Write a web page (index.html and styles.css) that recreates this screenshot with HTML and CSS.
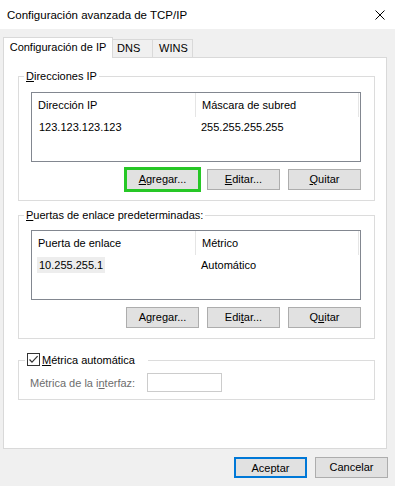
FILE: index.html
```html
<!DOCTYPE html>
<html lang="es">
<head>
<meta charset="utf-8">
<title>Configuración avanzada de TCP/IP</title>
<link rel="stylesheet" href="styles.css">
</head>
<body>
<div class="window">
  <header class="titlebar">
    <span class="title">Configuración avanzada de TCP/IP</span>
    <svg class="close" viewBox="0 0 10 10" width="10" height="10"><path d="M0.5 0.5 L9.5 9.5 M9.5 0.5 L0.5 9.5" stroke="#000" stroke-width="1" fill="none"/></svg>
  </header>

  <div class="tabs">
    <div class="tab tab-active">Configuración de IP</div>
    <div class="tab tab-dns">DNS</div>
    <div class="tab tab-wins">WINS</div>
  </div>

  <div class="panel">
    <fieldset class="group group-ip">
      <legend class="legend"><u>D</u>irecciones IP</legend>
      <div class="group-body body-ip">
        <div class="list">
          <div class="list-head">
            <div class="hcell">Dirección IP</div>
            <div class="hcell">Máscara de subred</div>
            <div class="hcell hcell-end"></div>
          </div>
          <div class="list-row">
            <div class="cell cell-first"><span class="item">123.123.123.123</span></div>
            <div class="cell">255.255.255.255</div>
          </div>
        </div>
        <div class="btn-row">
          <button class="btn btn-focus"><u>A</u>gregar...</button>
          <button class="btn"><u>E</u>ditar...</button>
          <button class="btn"><u>Q</u>uitar</button>
        </div>
      </div>
    </fieldset>

    <fieldset class="group group-gw">
      <legend class="legend"><u>P</u>uertas de enlace predeterminadas:</legend>
      <div class="group-body body-gw">
        <div class="list">
          <div class="list-head">
            <div class="hcell">Puerta de enlace</div>
            <div class="hcell">Métrico</div>
            <div class="hcell hcell-end"></div>
          </div>
          <div class="list-row">
            <div class="cell cell-first"><span class="item item-selected">10.255.255.1</span></div>
            <div class="cell">Automático</div>
          </div>
        </div>
        <div class="btn-row">
          <button class="btn">A<u>g</u>regar...</button>
          <button class="btn">Edi<u>t</u>ar...</button>
          <button class="btn">Q<u>u</u>itar</button>
        </div>
      </div>
    </fieldset>

    <fieldset class="group group-metric">
      <legend class="legend legend-check">
        <svg class="checkbox" viewBox="0 0 13 13" width="13" height="13"><rect x="0.5" y="0.5" width="12" height="12" fill="#fff" stroke="#333"/><path d="M2.5 6.5 L5 9.2 L10.6 3.2" stroke="#333" stroke-width="1.2" fill="none"/></svg>
        <span class="check-label"><u>M</u>étrica automática</span>
      </legend>
      <div class="group-body body-metric">
        <div class="metric-row">
          <span class="metric-label">Métrica de la i<u>n</u>terfaz:</span>
          <span class="metric-input"></span>
        </div>
      </div>
    </fieldset>
  </div>

  <div class="footer">
    <button class="btn btn-default">Aceptar</button>
    <button class="btn">Cancelar</button>
  </div>
</div>
</body>
</html>
```

FILE: styles.css
```css
* {
  box-sizing: border-box;
}

html, body {
  margin: 0;
  padding: 0;
}

body {
  width: 395px;
  height: 486px;
  overflow: hidden;
  background: #f0f0f0;
  font-family: "Liberation Sans", Arial, sans-serif;
  font-size: 11px;
  color: #000;
}

.window {
  width: 395px;
  height: 486px;
}

.titlebar {
  height: 29px;
  background: #fff;
  display: flex;
  align-items: center;
  justify-content: space-between;
  padding: 0 10px 0 7px;
}

.title {
  font-size: 11.5px;
}

.close {
  display: block;
}

/* Tabs */
.tabs {
  display: flex;
  align-items: flex-end;
  height: 20px;
  margin: 8px 0 0 3px;
}

.tab {
  height: 18px;
  border: 1px solid #d9d9d9;
  border-bottom: 0;
  background: #f0f0f0;
  line-height: 17px;
  white-space: nowrap;
}

.tab-active {
  position: relative;
  z-index: 1;
  width: 110px;
  height: 21px;
  margin-bottom: -1px;
  background: #fff;
  text-align: center;
  line-height: 18px;
}

.tab-dns {
  width: 41px;
  margin-left: -1px;
  padding-left: 4px;
}

.tab-wins {
  width: 41px;
  margin-left: -1px;
  padding-left: 6px;
}

/* Panel */
.panel {
  height: 392px;
  margin: 0 8px 0 3px;
  background: #fff;
  border: 1px solid #d9d9d9;
  padding: 11px 11px 0 14px;
}

.group {
  margin: 0;
  padding: 0;
  min-width: 0;
  border: 1px solid #dcdcdc;
}

.legend {
  margin-left: 5px;
  padding: 0 2px;
  line-height: 14px;
  height: 14px;
  white-space: nowrap;
}

.group-gw {
  margin-top: 7px;
}

.group-metric {
  margin-top: 14px;
}

.group-body {
  padding: 9px 13px 10px 12px;
}

.body-gw {
  padding-top: 8px;
}

.body-metric {
  padding: 6px 0 7px 11px;
}

/* List view */
.list {
  height: 70px;
  border: 1px solid #828790;
  background: #fff;
}

.list-head {
  display: grid;
  grid-template-columns: 164px 163px 1fr;
  height: 24px;
  line-height: 24px;
}

.hcell {
  padding-left: 6px;
  border-right: 1px solid #e5e5e5;
  white-space: nowrap;
  overflow: hidden;
}

.hcell-end {
  border-right: 0;
  padding: 0;
}

.list-row {
  display: grid;
  grid-template-columns: 164px 1fr;
  height: 16px;
  margin-top: 2px;
  line-height: 16px;
}

.cell {
  padding-left: 5px;
  white-space: nowrap;
}

.cell-first {
  padding-left: 5px;
}

.item {
  display: inline-block;
  padding: 0 2px;
}

.item-selected {
  background: #ededed;
}

/* Buttons */
.btn-row {
  display: flex;
  justify-content: flex-end;
  gap: 8px;
  margin-top: 7px;
}

.btn {
  width: 73px;
  height: 21px;
  padding: 0;
  border: 1px solid #adadad;
  background: #e1e1e1;
  font-family: inherit;
  font-size: 11px;
  color: #000;
  line-height: 19px;
}

.btn-focus {
  outline: 3px solid #26c726;
  outline-offset: -1px;
}

.btn-default {
  border: 2px solid #0078d7;
}

/* Metric group */
.legend-check {
  display: flex;
  align-items: flex-start;
  margin-left: 6px;
  padding: 0 13px 0 2px;
}

.checkbox {
  display: block;
  flex: none;
}

.check-label {
  margin-left: 2px;
  line-height: 14px;
}

.metric-row {
  display: flex;
  align-items: center;
  height: 19px;
}

.metric-label {
  width: 117px;
  color: #6d6d6d;
  white-space: nowrap;
}

.metric-input {
  width: 75px;
  height: 19px;
  border: 1px solid #cccccc;
  background: #fff;
}

/* Footer */
.footer {
  display: flex;
  justify-content: flex-end;
  gap: 8px;
  padding: 8px 7px 0 0;
}
```
